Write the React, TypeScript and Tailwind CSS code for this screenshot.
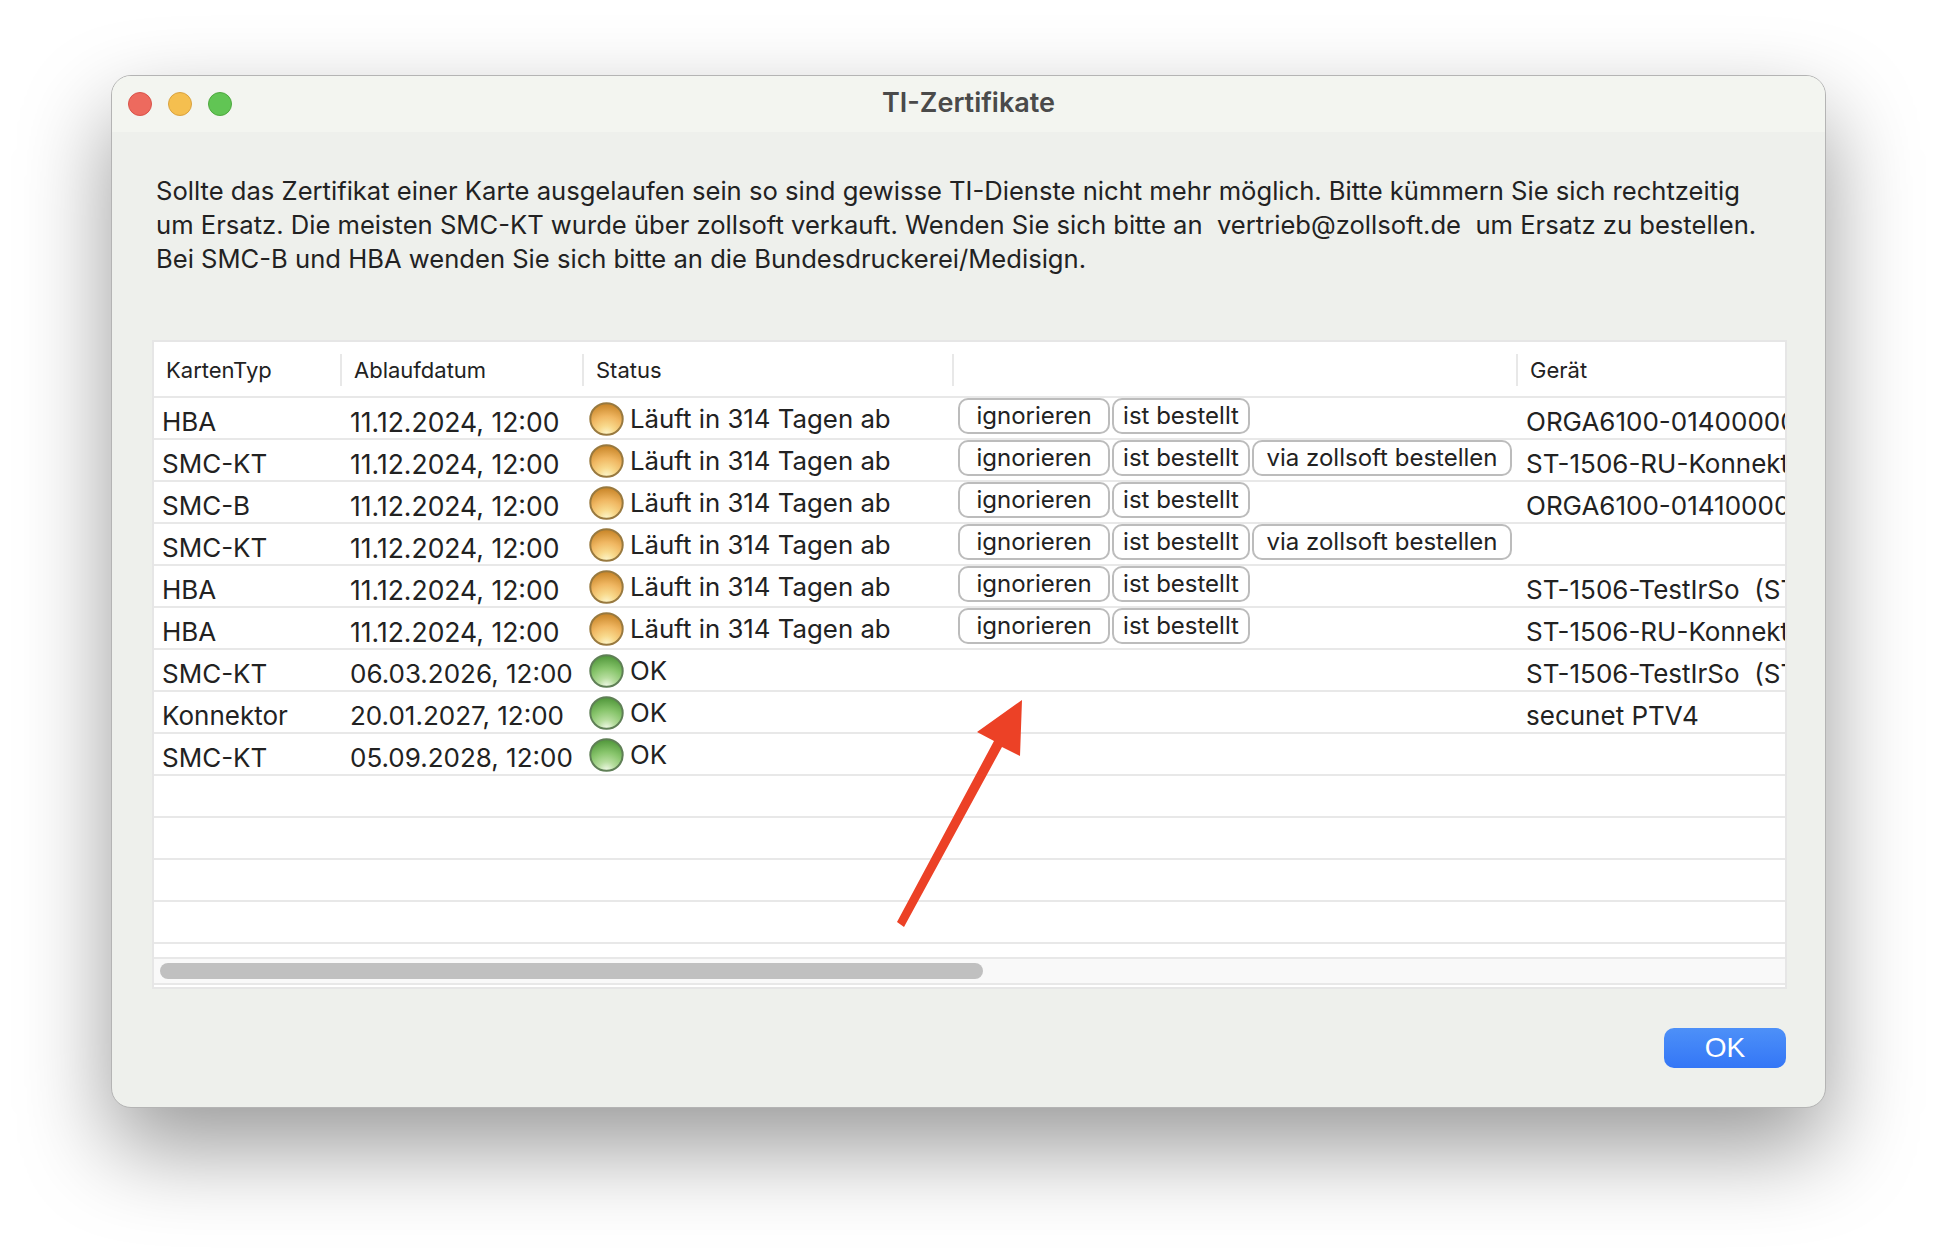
const rows = [
  { typ: "HBA", date: "11.12.2024, 12:00", warn: true, device: "ORGA6100-0140000000" },
  { typ: "SMC-KT", date: "11.12.2024, 12:00", warn: true, order: true, device: "ST-1506-RU-Konnektor" },
  { typ: "SMC-B", date: "11.12.2024, 12:00", warn: true, device: "ORGA6100-0141000000" },
  { typ: "SMC-KT", date: "11.12.2024, 12:00", warn: true, order: true, device: "" },
  { typ: "HBA", date: "11.12.2024, 12:00", warn: true, device: "ST-1506-TestIrSo  (ST-1506)" },
  { typ: "HBA", date: "11.12.2024, 12:00", warn: true, device: "ST-1506-RU-Konnektor" },
  { typ: "SMC-KT", date: "06.03.2026, 12:00", warn: false, device: "ST-1506-TestIrSo  (ST-1506)" },
  { typ: "Konnektor", date: "20.01.2027, 12:00", warn: false, device: "secunet PTV4" },
  { typ: "SMC-KT", date: "05.09.2028, 12:00", warn: false, device: "" },
];

function Ball({ warn }: { warn: boolean }) {
  const id = warn ? "ballWarn" : "ballOk";
  return (
    <svg width="35" height="34" viewBox="0 0 35 34" className="shrink-0">
      <defs>
        <radialGradient id={id} cx="0.5" cy="0.98" r="0.95">
          {warn ? (
            <>
              <stop offset="0" stopColor="#fdf6cc" />
              <stop offset="0.28" stopColor="#f8d98c" />
              <stop offset="0.6" stopColor="#f0b762" />
              <stop offset="1" stopColor="#c98629" />
            </>
          ) : (
            <>
              <stop offset="0" stopColor="#f1fae8" />
              <stop offset="0.28" stopColor="#b6dd9e" />
              <stop offset="0.6" stopColor="#88c56c" />
              <stop offset="1" stopColor="#52983c" />
            </>
          )}
        </radialGradient>
      </defs>
      <ellipse cx="17.5" cy="17" rx="16.2" ry="15.8" fill={`url(#${id})`} stroke={warn ? "#98793f" : "#5f7f56"} strokeWidth="2" />
    </svg>
  );
}

function Pill({ label, w }: { label: string; w: string }) {
  return (
    <span className={`flex h-[36px] items-center justify-center rounded-[10px] border-2 border-[#bcbcbc] bg-white text-[24px] ${w}`}>
      {label}
    </span>
  );
}

function Row({ row }: { row?: (typeof rows)[number] }) {
  return (
    <div className="flex h-[42px] border-b-2 border-[#e8e8e8] text-[#222] text-[26px] leading-[34px]">
      {row && (
        <>
          <div className="w-[196px] pl-[8px] pt-[7px]">{row.typ}</div>
          <div className={`w-[233px] pt-[7px] ${row.warn ? "text-[26.5px]" : "text-[26px]"}`}>{row.date}</div>
          <div className="flex w-[375px] items-start gap-[6px] pl-[6px] pt-[4px]">
            <Ball warn={row.warn} />
            <span className="mt-[0px] text-[25.8px]">{row.warn ? "Läuft in 314 Tagen ab" : "OK"}</span>
          </div>
          <div className="flex w-[568px] gap-[2px]">
            {row.warn && <Pill label="ignorieren" w="w-[152px]" />}
            {row.warn && <Pill label="ist bestellt" w="w-[138px]" />}
            {row.order && <Pill label="via zollsoft bestellen" w="w-[260px]" />}
          </div>
          <div className="min-w-0 flex-1 overflow-hidden whitespace-pre pt-[7px]">{row.device}</div>
        </>
      )}
    </div>
  );
}

export default function App() {
  return (
    <div className="min-h-screen bg-white pl-[111px] pt-[75px]" style={{ fontFamily: "Inter, sans-serif" }}>
      <div className="relative flex h-[1033px] w-[1715px] flex-col overflow-hidden rounded-[20px] border border-[#b4b4b4] bg-[#eef0ec] shadow-[0_40px_90px_rgba(0,0,0,0.4)]">
        <div className="relative flex h-[56px] items-center justify-center bg-[#f3f5f0] pb-[1px]">
          <div className="absolute left-[16px] top-[16px] flex gap-[16px]">
            <span className="h-[24px] w-[24px] rounded-full border border-[#d9534a] bg-[#ed6a5e]" />
            <span className="h-[24px] w-[24px] rounded-full border border-[#d9a23f] bg-[#f5bf4f]" />
            <span className="h-[24px] w-[24px] rounded-full border border-[#4ea83f] bg-[#61c554]" />
          </div>
          <span className="text-[27px] font-semibold text-[#4a4a4a]">TI-Zertifikate</span>
        </div>

        <p className="ml-[44px] mt-[42px] whitespace-pre text-[25.6px] leading-[34px] text-[#222]">
          {"Sollte das Zertifikat einer Karte ausgelaufen sein so sind gewisse TI-Dienste nicht mehr möglich. Bitte kümmern Sie sich rechtzeitig\num Ersatz. Die meisten SMC-KT wurde über zollsoft verkauft. Wenden Sie sich bitte an  vertrieb@zollsoft.de  um Ersatz zu bestellen.\nBei SMC-B und HBA wenden Sie sich bitte an die Bundesdruckerei/Medisign."}
        </p>

        <div className="ml-[40px] mt-[64px] flex h-[649px] w-[1635px] flex-col overflow-hidden border-2 border-[#e6e6e6] bg-white">
          <div className="flex h-[56px] items-center border-b-2 border-[#e8e8e8] pt-[2px] text-[22px] text-[#222]">
            <div className="h-[32px] w-[188px] border-r-2 border-[#e8e8e8] pl-[12px] leading-[32px]">KartenTyp</div>
            <div className="h-[32px] w-[242px] border-r-2 border-[#e8e8e8] pl-[12px] leading-[32px]">Ablaufdatum</div>
            <div className="h-[32px] w-[370px] border-r-2 border-[#e8e8e8] pl-[12px] leading-[32px]">Status</div>
            <div className="h-[32px] w-[564px] border-r-2 border-[#e8e8e8]" />
            <div className="pl-[12px] leading-[32px]">Gerät</div>
          </div>
          {rows.map((row, i) => (
            <Row key={i} row={row} />
          ))}
          {[0, 1, 2, 3].map((i) => (
            <Row key={i} />
          ))}
          <div className="mt-[13px] flex h-[28px] items-center border-y-2 border-[#e8e8e8] bg-[#f9f9f9] pl-[6px]">
            <div className="h-[16px] w-[823px] rounded-full bg-[#c0c0c0]" />
          </div>
        </div>

        <div className="mr-[39px] mt-[39px] flex justify-end">
          <button
            className="h-[40px] w-[122px] rounded-[10px] bg-gradient-to-b from-[#4d90f8] to-[#3476f6] text-[28px] leading-[38px] text-white"
            style={{ fontFamily: "'Liberation Sans', sans-serif" }}
          >
            OK
          </button>
        </div>
      </div>

      <svg className="absolute left-0 top-0" width="1938" height="1256">
        <polygon
          points="1022,700 977,732 994,741 897,922 904,927 1002,747 1020,756"
          fill="#ec4126"
        />
      </svg>
    </div>
  );
}
